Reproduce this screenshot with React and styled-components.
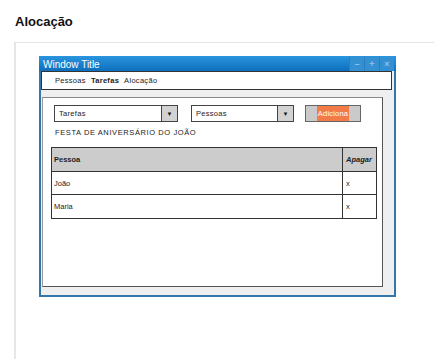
import React from 'react';
import styled, { createGlobalStyle } from 'styled-components';

const GlobalStyle = createGlobalStyle`
  body {
    margin: 0;
    background: #ffffff;
    font-family: "Liberation Sans", Arial, sans-serif;
  }
`;

const Page = styled.div`
  padding-left: 14px;
  height: 359px;
  overflow: hidden;
`;

const Heading = styled.h1`
  margin: 0 0 12px 0;
  padding: 14px 0 0 1px;
  font-size: 13px;
  line-height: 16px;
  font-weight: bold;
  color: #111;
`;

const Panel = styled.section`
  border-top: 1px solid #e4e4e4;
  border-left: 2px solid #e6e6e6;
  height: 317px;
  padding: 13px 0 0 23px;
  box-sizing: border-box;
`;

const Window = styled.div`
  width: 357px;
  height: 241px;
  box-sizing: border-box;
  border: 2px solid #3377aa;
  background: #efefef;
  display: flex;
  flex-direction: column;
`;

const TitleBar = styled.div`
  height: 13px;
  margin: -2px -2px 0 -2px;
  padding: 2px 2px 0 4px;
  display: flex;
  align-items: center;
  justify-content: space-between;
  background: linear-gradient(#2a95de, #0d6fbd);
  color: #fff;
  font-size: 10px;
`;

const TitleText = styled.span`
  line-height: 13px;
`;

const WinButtons = styled.div`
  display: flex;
  align-self: stretch;
  margin-top: -1px;
`;

const WinButton = styled.span`
  width: 14px;
  display: flex;
  align-items: center;
  justify-content: center;
  background: #3390d2;
  border-left: 1px solid #2a7cbd;
  color: #8fc1e8;
  font-size: 9px;
  font-weight: bold;
`;

const MenuBar = styled.div`
  height: 19px;
  box-sizing: border-box;
  margin-right: 2px;
  border: 1px solid #333;
  background: #fff;
  display: flex;
  align-items: center;
  gap: 5px;
  padding-left: 13px;
  font-size: 7.5px;
  color: #222;
`;

const MenuItem = styled.span`
  font-weight: ${p => (p.active ? 'bold' : 'normal')};
  letter-spacing: 0.3px;
`;

const Content = styled.div`
  margin: 7px 11px 0 1px;
  height: 190px;
  box-sizing: border-box;
  border: 1px solid #555;
  border-top-color: #888;
  border-left-color: #999;
  background: #fff;
  padding: 7px 8px;
`;

const Toolbar = styled.div`
  display: flex;
  align-items: center;
  padding-left: 3px;
  height: 17px;
`;

const Select = styled.div`
  width: ${p => p.width}px;
  margin-right: ${p => p.gap}px;
  height: 17px;
  box-sizing: border-box;
  border: 1px solid #444;
  display: flex;
  align-items: stretch;
  font-size: 7.5px;
  color: #222;
`;

const SelectText = styled.span`
  flex: 1;
  display: flex;
  align-items: center;
  padding-left: 4px;
  letter-spacing: 0.3px;
`;

const SelectArrow = styled.span`
  width: 15px;
  border-left: 1px solid #444;
  background: #d2d2d2;
  display: flex;
  align-items: center;
  justify-content: center;
  font-size: 6px;
  color: #111;
`;

const Button = styled.div`
  width: 56px;
  height: 17px;
  box-sizing: border-box;
  border: 1px solid #666;
  background: #cacaca;
  display: flex;
  justify-content: center;
`;

const ButtonLabel = styled.span`
  width: 32px;
  background: #f27b47;
  color: #fff;
  font-size: 7.5px;
  display: flex;
  align-items: center;
  justify-content: center;
  letter-spacing: 0.2px;
`;

const Caption = styled.div`
  margin-top: 6px;
  padding-left: 4px;
  height: 10px;
  line-height: 10px;
  font-size: 7.5px;
  letter-spacing: 0.6px;
  color: #222;
`;

const Table = styled.div`
  margin-top: 9px;
  width: 324px;
  border: 1px solid #333;
`;

const Row = styled.div`
  display: flex;
  height: ${p => p.h}px;
  background: ${p => (p.header ? '#cccccc' : '#fff')};
  border-top: ${p => (p.first ? 'none' : '1px solid #333')};
  font-size: 7.5px;
  font-weight: ${p => (p.header ? 'bold' : 'normal')};
  color: #222;
`;

const Cell = styled.div`
  display: flex;
  align-items: center;
  padding-left: ${p => (p.narrow ? 3 : 2)}px;
  ${p => (p.narrow ? 'width: 30px; border-left: 1px solid #333;' : 'flex: 1;')}
  font-style: ${p => (p.italic ? 'italic' : 'normal')};
`;

const rows = [
  { name: 'João' },
  { name: 'Maria' },
];

export default function App() {
  return (
    <Page>
      <GlobalStyle />
      <Heading>Alocação</Heading>
      <Panel>
        <Window>
          <TitleBar>
            <TitleText>Window Title</TitleText>
            <WinButtons>
              <WinButton>–</WinButton>
              <WinButton>+</WinButton>
              <WinButton>×</WinButton>
            </WinButtons>
          </TitleBar>
          <MenuBar>
            <MenuItem>Pessoas</MenuItem>
            <MenuItem active>Tarefas</MenuItem>
            <MenuItem>Alocação</MenuItem>
          </MenuBar>
          <Content>
            <Toolbar>
              <Select width={124} gap={13}>
                <SelectText>Tarefas</SelectText>
                <SelectArrow>▼</SelectArrow>
              </Select>
              <Select width={103} gap={11}>
                <SelectText>Pessoas</SelectText>
                <SelectArrow>▼</SelectArrow>
              </Select>
              <Button>
                <ButtonLabel>Adiciona</ButtonLabel>
              </Button>
            </Toolbar>
            <Caption>FESTA DE ANIVERSÁRIO DO JOÃO</Caption>
            <Table>
              <Row header first h={23}>
                <Cell>Pessoa</Cell>
                <Cell narrow italic>Apagar</Cell>
              </Row>
              {rows.map((r, i) => (
                <Row key={r.name} h={i === 0 ? 22 : 23}>
                  <Cell>{r.name}</Cell>
                  <Cell narrow>x</Cell>
                </Row>
              ))}
            </Table>
          </Content>
        </Window>
      </Panel>
    </Page>
  );
}
